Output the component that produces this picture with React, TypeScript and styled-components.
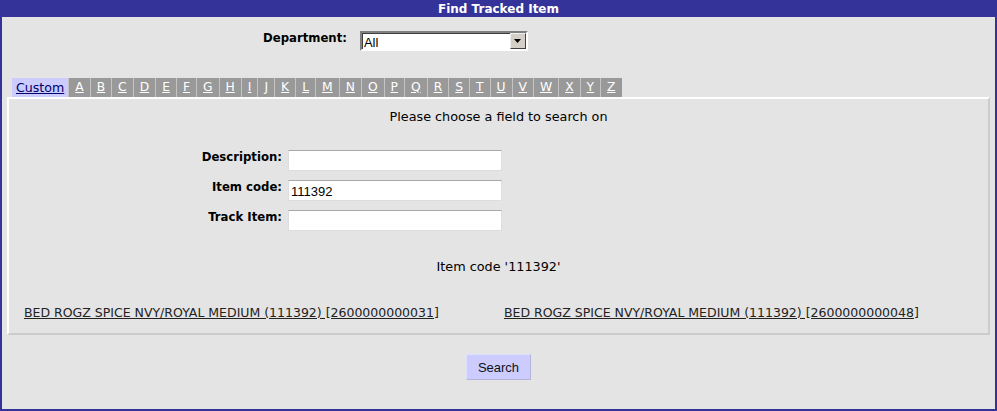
import styled, {createGlobalStyle} from "styled-components";

const GlobalStyle = createGlobalStyle`
    html, body {
        margin: 0;
        padding: 0;
        background: #e4e4e4;
    }
`;

const LETTERS = "ABCDEFGHIJKLMNOPQRSTUVWXYZ".split("");

const RESULTS = [
    "BED ROGZ SPICE NVY/ROYAL MEDIUM (111392) [2600000000031]",
    "BED ROGZ SPICE NVY/ROYAL MEDIUM (111392) [2600000000048]",
];

const Frame = styled.div`
    box-sizing: border-box;
    width: 997px;
    height: 411px;
    border: 2px solid #333399;
    border-top: 0;
    background: #e4e4e4;
    font-family: "DejaVu Sans", Verdana, sans-serif;
    color: #000;
    display: flex;
    flex-direction: column;
`;

const TitleBar = styled.div`
    height: 17px;
    line-height: 19px;
    background: #333399;
    color: #fff;
    font-size: 12px;
    font-weight: bold;
    text-align: center;
    margin: 0 -2px;
`;

const DeptRow = styled.div`
    display: flex;
    align-items: flex-start;
    padding-left: 261px;
    margin-top: 14px;
    gap: 13px;
`;

const Label = styled.label`
    font-size: 11.7px;
    line-height: 15px;
    font-weight: bold;
    white-space: nowrap;
`;

const SelectBox = styled.div`
    box-sizing: border-box;
    width: 168px;
    height: 20px;
    display: flex;
    align-items: center;
    background: #fff;
    border: 2px solid;
    border-color: #808080 #ffffff #ffffff #808080;
    box-shadow: inset 1px 1px 0 #404040;
`;

const SelectValue = styled.span`
    flex: 1;
    font-family: "Liberation Sans", Arial, sans-serif;
    font-size: 13px;
    padding-left: 2px;
    padding-top: 2px;
`;

const ArrowButton = styled.span`
    box-sizing: border-box;
    width: 16px;
    height: 16px;
    background: #d4d0c8;
    border: 1px solid;
    border-color: #f0f0f0 #404040 #404040 #f0f0f0;
    display: flex;
    align-items: center;
    justify-content: center;
`;

const TabRow = styled.div`
    display: flex;
    margin: 27px 0 0 10px;
    height: 19px;
`;

const Tab = styled.a<{ $active?: boolean }>`
    display: block;
    line-height: 19px;
    font-size: ${p => (p.$active ? "12.6px" : "12.3px")};
    padding: 0 ${p => (p.$active ? "4px" : "6px")};
    background: ${p => (p.$active ? "#ccccff" : "#999999")};
    color: ${p => (p.$active ? "#000066" : "#ffffff")};
    text-decoration: underline;
    border-left: ${p => (p.$active ? "0" : "1px solid #c4c4c4")};
    cursor: pointer;
`;

const Panel = styled.div`
    box-sizing: border-box;
    margin: 0 5px;
    height: 238px;
    border: 2px solid;
    border-color: #ffffff #cccccc #cccccc #ffffff;
    display: flex;
    flex-direction: column;
`;

const Prompt = styled.div`
    text-align: center;
    font-size: 12.8px;
    margin-top: 10px;
`;

const FormGrid = styled.div`
    display: grid;
    grid-template-columns: 273px 214px;
    column-gap: 6px;
    row-gap: 9px;
    margin-top: 26px;
    align-items: start;
`;

const FieldLabel = styled(Label)`
    text-align: right;
    padding-top: 0;
`;

const TextInput = styled.input`
    box-sizing: border-box;
    width: 214px;
    height: 21px;
    border: 1px solid #dddddd;
    border-top-color: #a8a8a8;
    background: #fff;
    font-family: "Liberation Sans", Arial, sans-serif;
    font-size: 13px;
    padding: 2px 2px 0;
    outline: none;
`;

const Summary = styled.div`
    text-align: center;
    font-size: 12.8px;
    margin-top: 28px;
`;

const ResultGrid = styled.div`
    display: grid;
    grid-template-columns: 480px 1fr;
    margin-top: 28px;
`;

const ResultLink = styled.a`
    padding-left: 15px;
    font-size: 12.5px;
    color: #222;
    text-decoration: underline;
    white-space: nowrap;
`;

const Footer = styled.div`
    display: flex;
    justify-content: center;
    margin-top: 19px;
`;

const SearchButton = styled.button`
    box-sizing: border-box;
    width: 65px;
    height: 26px;
    background: #ccccff;
    border: 1px solid;
    border-color: #e0e0ff #b4b4d8 #b4b4d8 #e0e0ff;
    font-family: "Liberation Sans", Arial, sans-serif;
    font-size: 13px;
    color: #111;
    padding: 0;
`;

export default function App() {
    return (
        <>
            <GlobalStyle/>
            <Frame>
                <TitleBar>Find Tracked Item</TitleBar>
                <DeptRow>
                    <Label>Department:</Label>
                    <SelectBox>
                        <SelectValue>All</SelectValue>
                        <ArrowButton>
                            <svg width="7" height="4" viewBox="0 0 7 4">
                                <path d="M0 0h7L3.5 4z" fill="#000"/>
                            </svg>
                        </ArrowButton>
                    </SelectBox>
                </DeptRow>

                <TabRow>
                    <Tab $active>Custom</Tab>
                    {LETTERS.map(letter => (
                        <Tab key={letter}>{letter}</Tab>
                    ))}
                </TabRow>

                <Panel>
                    <Prompt>Please choose a field to search on</Prompt>
                    <FormGrid>
                        <FieldLabel>Description:</FieldLabel>
                        <TextInput defaultValue=""/>
                        <FieldLabel>Item code:</FieldLabel>
                        <TextInput defaultValue="111392"/>
                        <FieldLabel>Track Item:</FieldLabel>
                        <TextInput defaultValue=""/>
                    </FormGrid>
                    <Summary>Item code '111392'</Summary>
                    <ResultGrid>
                        {RESULTS.map(r => (
                            <div key={r}><ResultLink>{r}</ResultLink></div>
                        ))}
                    </ResultGrid>
                </Panel>

                <Footer>
                    <SearchButton>Search</SearchButton>
                </Footer>
            </Frame>
        </>
    );
}
